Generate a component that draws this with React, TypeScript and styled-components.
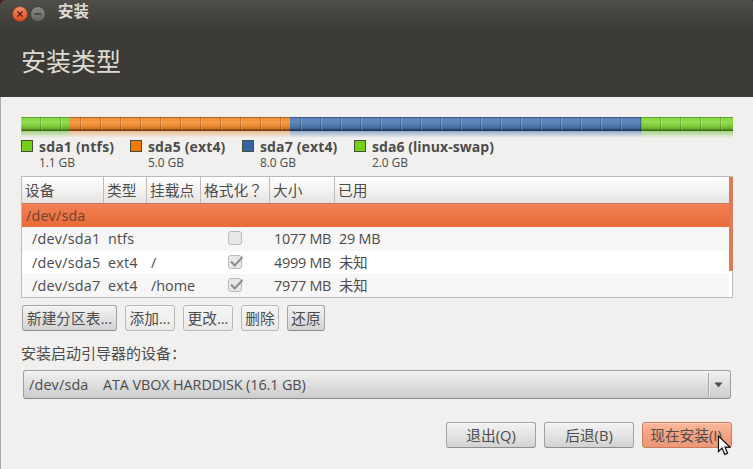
import React from "react";
import styled, { createGlobalStyle, css } from "styled-components";

const GlobalStyle = createGlobalStyle`
  * { box-sizing: border-box; }
  html, body { margin: 0; padding: 0; overflow: hidden; }
  body { background: #f1f0ee; }
`;

const fontStack = `"Open Sans", "Noto Sans CJK SC", sans-serif`;

const Window = styled.div`
  width: 753px;
  height: 469px;
  display: flex;
  flex-direction: column;
  background: #f1f0ee;
  color: #4c4c4c;
  font: 15px/20px ${fontStack};
  white-space: nowrap;
  overflow: hidden;
`;

const TitleBar = styled.header`
  flex: none;
  height: 28px;
  display: flex;
  align-items: center;
  padding: 0 0 1px 12px;
  background: linear-gradient(#504f4a, #45443f 55%, #3c3b37);
  border-radius: 6px 2px 0 0;
`;

const WindowTitle = styled.span`
  margin: -3px 0 0 10px;
  color: #dfdbd2;
  font-size: 15.4px;
  font-weight: 700;
`;

const ControlIcon = styled.svg`
  display: block;
  width: 16px;
  height: 16px;
  margin-right: 2px;
`;

const Heading = styled.h1`
  flex: none;
  height: 69px;
  margin: 0;
  padding: 15px 0 0 21px;
  background: #3c3b37;
  color: #dfdbd2;
  font-size: 25px;
  line-height: 36px;
  font-weight: 400;
`;

const TopCorner = styled.div`
  flex: none;
  background: #4a1d14;
`;

const Content = styled.main`
  flex: 1;
  display: flex;
  flex-direction: column;
  padding: 20px 20px 0 20px;
  border-left: 1px solid #a9a8a6;
`;

const Bar = styled.div`
  flex: none;
  display: flex;
  width: 712px;
  height: 22px;
`;

const Segment = styled.div<{ $w: number; $shift: number; $rgb: string; $stops: string }>`
  width: ${(p) => p.$w}px;
  &::before, &::after { content: ""; display: block; }
  &::before {
    height: 14px;
    background:
      repeating-linear-gradient(90deg, transparent 0 19px, rgba(0, 0, 0, 0.2) 19px 20px) ${(p) => p.$shift}px 0 / 20px 14px,
      repeating-linear-gradient(90deg, rgba(255, 255, 255, 0.18) 0 1px, transparent 1px 20px) ${(p) => p.$shift}px 0 / 20px 14px,
      linear-gradient(${(p) => p.$stops});
  }
  &::after {
    height: 7px;
    background: linear-gradient(rgba(${(p) => p.$rgb}, 0.6), rgba(${(p) => p.$rgb}, 0));
  }
`;

const Legend = styled.div`
  flex: none;
  height: 37px;
  display: flex;
`;

const LegendItem = styled.div<{ $w: number }>`
  width: ${(p) => p.$w}px;
  display: grid;
  grid-template-columns: 18px auto;
  grid-template-rows: 16px 15px;
`;

const Swatch = styled.i<{ $c: string }>`
  width: 12px;
  height: 12px;
  margin-top: 1px;
  background: ${(p) => p.$c};
  border: 1px solid #44503a;
`;

const PartName = styled.b<{ $track: number }>`
  font-size: 14px;
  line-height: 16px;
  letter-spacing: ${(p) => p.$track}px;
`;

const PartSize = styled.span`
  grid-column: 2;
  font-size: 12px;
  line-height: 15px;
  letter-spacing: -0.1px;
`;

const Table = styled.section`
  flex: none;
  display: flex;
  width: 712px;
  height: 122px;
  border: 1px solid #bcbbb9;
  border-width: 1px 0 1px 1px;
  background: #fff;
`;

const Rows = styled.div`
  flex: 1;
  display: flex;
  flex-direction: column;
`;

const columns = "82px 43px 54px 69px 65px 1fr";

const HeaderRow = styled.div`
  display: grid;
  grid-template-columns: ${columns};
  flex: none;
  height: 27px;
  background: linear-gradient(#fff, #f5f4f3 45%, #e4e3e1);
  border-bottom: 1px solid #c07b5c;
`;

const HeaderCell = styled.span`
  padding: 2px 0 0 3px;
  line-height: 21px;
  border-right: 1px solid #bebdbb;
  font-size: 14.7px;
  font-family: "Noto Sans CJK SC", sans-serif;
  &:last-child { border-right: 0; }
`;

/* Traditional Chinese faces centre the question mark in its full-width box. */
const CenteredMark = styled.span`
  font-family: "Noto Sans CJK TC", sans-serif;
`;

const Row = styled.div<{ $tone: "selected" | "odd" | "even" }>`
  display: grid;
  grid-template-columns: ${columns};
  flex: none;
  height: 23.3px;
  line-height: 23px;
  font-size: 14.4px;
  background: ${(p) => ({
    selected: "linear-gradient(#f28055, #e86b38)",
    odd: "#f6f6f6",
    even: "#fff",
  })[p.$tone]};
  ${(p) => p.$tone === "selected" && css`color: #704130;`}
`;

const Cell = styled.span<{ $pad?: number; $track?: number }>`
  padding-left: ${(p) => p.$pad ?? 4}px;
  letter-spacing: ${(p) => p.$track ?? 0}px;
`;

const CheckIcon = styled.svg`
  display: block;
  width: 18px;
  height: 18px;
  margin-top: 2px;
`;

const ScrollTrack = styled.div`
  width: 4px;
  border-right: 1px solid #bcbbb9;
`;

const ScrollThumb = styled.div`
  width: 4px;
  height: 94px;
  background: #d97d59;
`;

const Toolbar = styled.div`
  flex: none;
  display: flex;
  gap: 8px;
  margin: 7px 0 0 1px;
`;

const Button = styled.button<{ $w: number; $kind?: "faded" | "primary" }>`
  width: ${(p) => p.$w}px;
  height: 26px;
  padding: 0 0 1px;
  display: flex;
  justify-content: center;
  align-items: center;
  border: 1px solid #a3a2a0;
  border-bottom-color: #8f8e8c;
  border-radius: 3px;
  background: linear-gradient(#f3f3f3, #e2e2e2 55%, #d2d2d2);
  box-shadow: inset 0 1px #fafafa;
  color: #4c4c4c;
  font: 14.7px/20px ${fontStack};
  ${(p) => p.$kind === "faded" && css`
    background: linear-gradient(#f5f5f4, #eaeae9);
    border-color: #bbb9b7;
  `}
  ${(p) => p.$kind === "primary" && css`
    padding-right: 2px;
    background: linear-gradient(#fbb89c, #f3a080 55%, #ec9878);
    border-color: #c77c5d;
    box-shadow: inset 0 1px #fdccb7;
  `}
`;

const Label = styled.div`
  flex: none;
  margin-top: 12px;
  line-height: 20px;
`;

const Combo = styled.div`
  flex: none;
  display: flex;
  align-items: center;
  width: 708px;
  height: 29px;
  margin: 7px 0 0 2px;
  padding-left: 5px;
  border: 1px solid #a09f9d;
  border-bottom-color: #8b8a88;
  border-radius: 3px;
  background: linear-gradient(#f1f1f1, #dedede 50%, #cccccc);
  box-shadow: inset 0 1px #f9f9f9;
`;

const Device = styled.span`
  width: 74px;
  font-size: 14.4px;
  letter-spacing: 0.15px;
`;

const Model = styled.span`
  flex: 1;
  font-size: 14.4px;
  letter-spacing: -0.1px;
`;

const ComboArrow = styled.span`
  width: 22px;
  height: 23px;
  display: flex;
  align-items: center;
  padding-left: 5px;
  border-left: 1px solid #a8a8a8;
  box-shadow: inset 1px 0 #ededed;
`;

const Footer = styled.footer`
  flex: none;
  display: flex;
  justify-content: flex-end;
  gap: 8px;
  margin: 23px 1px 0 0;
`;

const PointerAnchor = styled.span`
  position: relative;
  display: flex;
`;

const Pointer = styled.svg`
  position: absolute;
  left: 75px;
  top: 13px;
  width: 14px;
  height: 21px;
`;

const GREEN = "#62a52a 0 1px, #86d941 1px, #92dc51 5px, #80ca3c 9px, #65a829 12px, #3d6b18 13px, #3d6b18";
const ORANGE = "#a9672a 0 1px, #f09034 1px, #f49b47 5px, #ea8d35 9px, #c77020 12px, #6e3a10 13px, #6e3a10";
const BLUE = "#3c5c8b 0 1px, #5a7fb5 1px, #6288bb 5px, #5078ac 9px, #3c6091 12px, #1d345b 13px, #1d345b";

const segments = [
  { w: 48, shift: 0, rgb: "115,190,60", stops: GREEN },
  { w: 221, shift: -8, rgb: "235,150,75", stops: ORANGE },
  { w: 352, shift: -9, rgb: "85,125,175", stops: BLUE },
  { w: 91, shift: -1, rgb: "115,190,60", stops: GREEN },
];

const legend = [
  { w: 109, c: "#73d216", name: "sda1 (ntfs)", size: "1.1 GB", track: 0.2 },
  { w: 112, c: "#f57900", name: "sda5 (ext4)", size: "5.0 GB", track: 0.15 },
  { w: 112, c: "#3465a4", name: "sda7 (ext4)", size: "8.0 GB", track: 0.15 },
  { w: 150, c: "#73d216", name: "sda6 (linux-swap)", size: "2.0 GB", track: 0.05 },
];

const partitions = [
  { dev: "/dev/sda1", fs: "ntfs", mount: "", format: false, size: "1077 MB", used: "29 MB" },
  { dev: "/dev/sda5", fs: "ext4", mount: "/", format: true, size: "4999 MB", used: "未知" },
  { dev: "/dev/sda7", fs: "ext4", mount: "/home", format: true, size: "7977 MB", used: "未知" },
];

const Check = ({ on }: { on: boolean }) => (
  <CheckIcon viewBox="0 0 18 18">
    <rect x="1.5" y="2.5" width="13" height="13" rx="2.5" fill="#e9e8e7" stroke="#b9b8b6" />
    {on && <path d="M4 8.5l3.7 4L15.5 4" fill="none" stroke="#8c8c8c" strokeWidth="1.9" />}
  </CheckIcon>
);

export default function App() {
  return (
    <>
      <GlobalStyle />
      <Window lang="zh-CN">
        <TopCorner>
          <TitleBar>
            <ControlIcon viewBox="0 0 16 16">
              <defs>
                <linearGradient id="close" x2="0" y2="1">
                  <stop stopColor="#f78b64" />
                  <stop offset="1" stopColor="#df4b1c" />
                </linearGradient>
              </defs>
              <circle cx="8" cy="8" r="7.5" fill="url(#close)" stroke="#7b3923" strokeWidth=".7" />
              <path d="M5.3 5.3l5.4 5.4M10.7 5.3l-5.4 5.4" stroke="#46180b" strokeWidth="1.2" />
            </ControlIcon>
            <ControlIcon viewBox="0 0 16 16">
              <defs>
                <linearGradient id="min" x2="0" y2="1">
                  <stop stopColor="#8b8a84" />
                  <stop offset="1" stopColor="#65645f" />
                </linearGradient>
              </defs>
              <circle cx="8" cy="8" r="7.5" fill="url(#min)" stroke="#363530" strokeWidth=".7" />
              <path d="M4.5 8h7" stroke="#33322e" strokeWidth="1.2" />
            </ControlIcon>
            <WindowTitle>安装</WindowTitle>
          </TitleBar>
        </TopCorner>
        <Heading>安装类型</Heading>
        <Content>
          <Bar>
            {segments.map((s, i) => (
              <Segment key={i} $w={s.w} $shift={s.shift} $rgb={s.rgb} $stops={s.stops} />
            ))}
          </Bar>
          <Legend>
            {legend.map((l) => (
              <LegendItem key={l.name} $w={l.w}>
                <Swatch $c={l.c} />
                <PartName $track={l.track}>{l.name}</PartName>
                <PartSize>{l.size}</PartSize>
              </LegendItem>
            ))}
          </Legend>
          <Table>
            <Rows>
              <HeaderRow>
                <HeaderCell>设备</HeaderCell>
                <HeaderCell>类型</HeaderCell>
                <HeaderCell>挂载点</HeaderCell>
                <HeaderCell>格式化<CenteredMark lang="zh-TW">？</CenteredMark></HeaderCell>
                <HeaderCell>大小</HeaderCell>
                <HeaderCell>已用</HeaderCell>
              </HeaderRow>
              <Row $tone="selected"><Cell $track={0.15}>/dev/sda</Cell></Row>
              {partitions.map((p, i) => (
                <Row key={p.dev} $tone={i % 2 ? "even" : "odd"}>
                  <Cell $pad={10} $track={0.2}>{p.dev}</Cell>
                  <Cell $track={0.15}>{p.fs}</Cell>
                  <Cell>{p.mount}</Cell>
                  <Cell $pad={26}><Check on={p.format} /></Cell>
                  <Cell $track={-0.25}>{p.size}</Cell>
                  <Cell $track={-0.25}>{p.used}</Cell>
                </Row>
              ))}
            </Rows>
            <ScrollTrack><ScrollThumb /></ScrollTrack>
          </Table>
          <Toolbar>
            <Button $w={95}>新建分区表...</Button>
            <Button $w={50} $kind="faded">添加...</Button>
            <Button $w={50} $kind="faded">更改...</Button>
            <Button $w={38} $kind="faded">删除</Button>
            <Button $w={38}>还原</Button>
          </Toolbar>
          <Label>安装启动引导器的设备：</Label>
          <Combo>
            <Device>/dev/sda</Device>
            <Model>ATA VBOX HARDDISK (16.1 GB)</Model>
            <ComboArrow>
              <svg width="9" height="6" viewBox="0 0 9 6"><path d="M.5 .5h8L4.5 5.5z" fill="#4c4c4c" /></svg>
            </ComboArrow>
          </Combo>
          <Footer>
            <Button $w={90}>退出(Q)</Button>
            <Button $w={90}>后退(B)</Button>
            <PointerAnchor>
              <Button $w={90} $kind="primary">现在安装(I)</Button>
              <Pointer viewBox="0 0 14 21">
                <path d="M1.5 1v15.5l3.6-3.4 2.6 6.3 2.9-1.2-2.6-6.1h4.9z" fill="#fff" stroke="#111" strokeWidth="1.2" />
              </Pointer>
            </PointerAnchor>
          </Footer>
        </Content>
      </Window>
    </>
  );
}
